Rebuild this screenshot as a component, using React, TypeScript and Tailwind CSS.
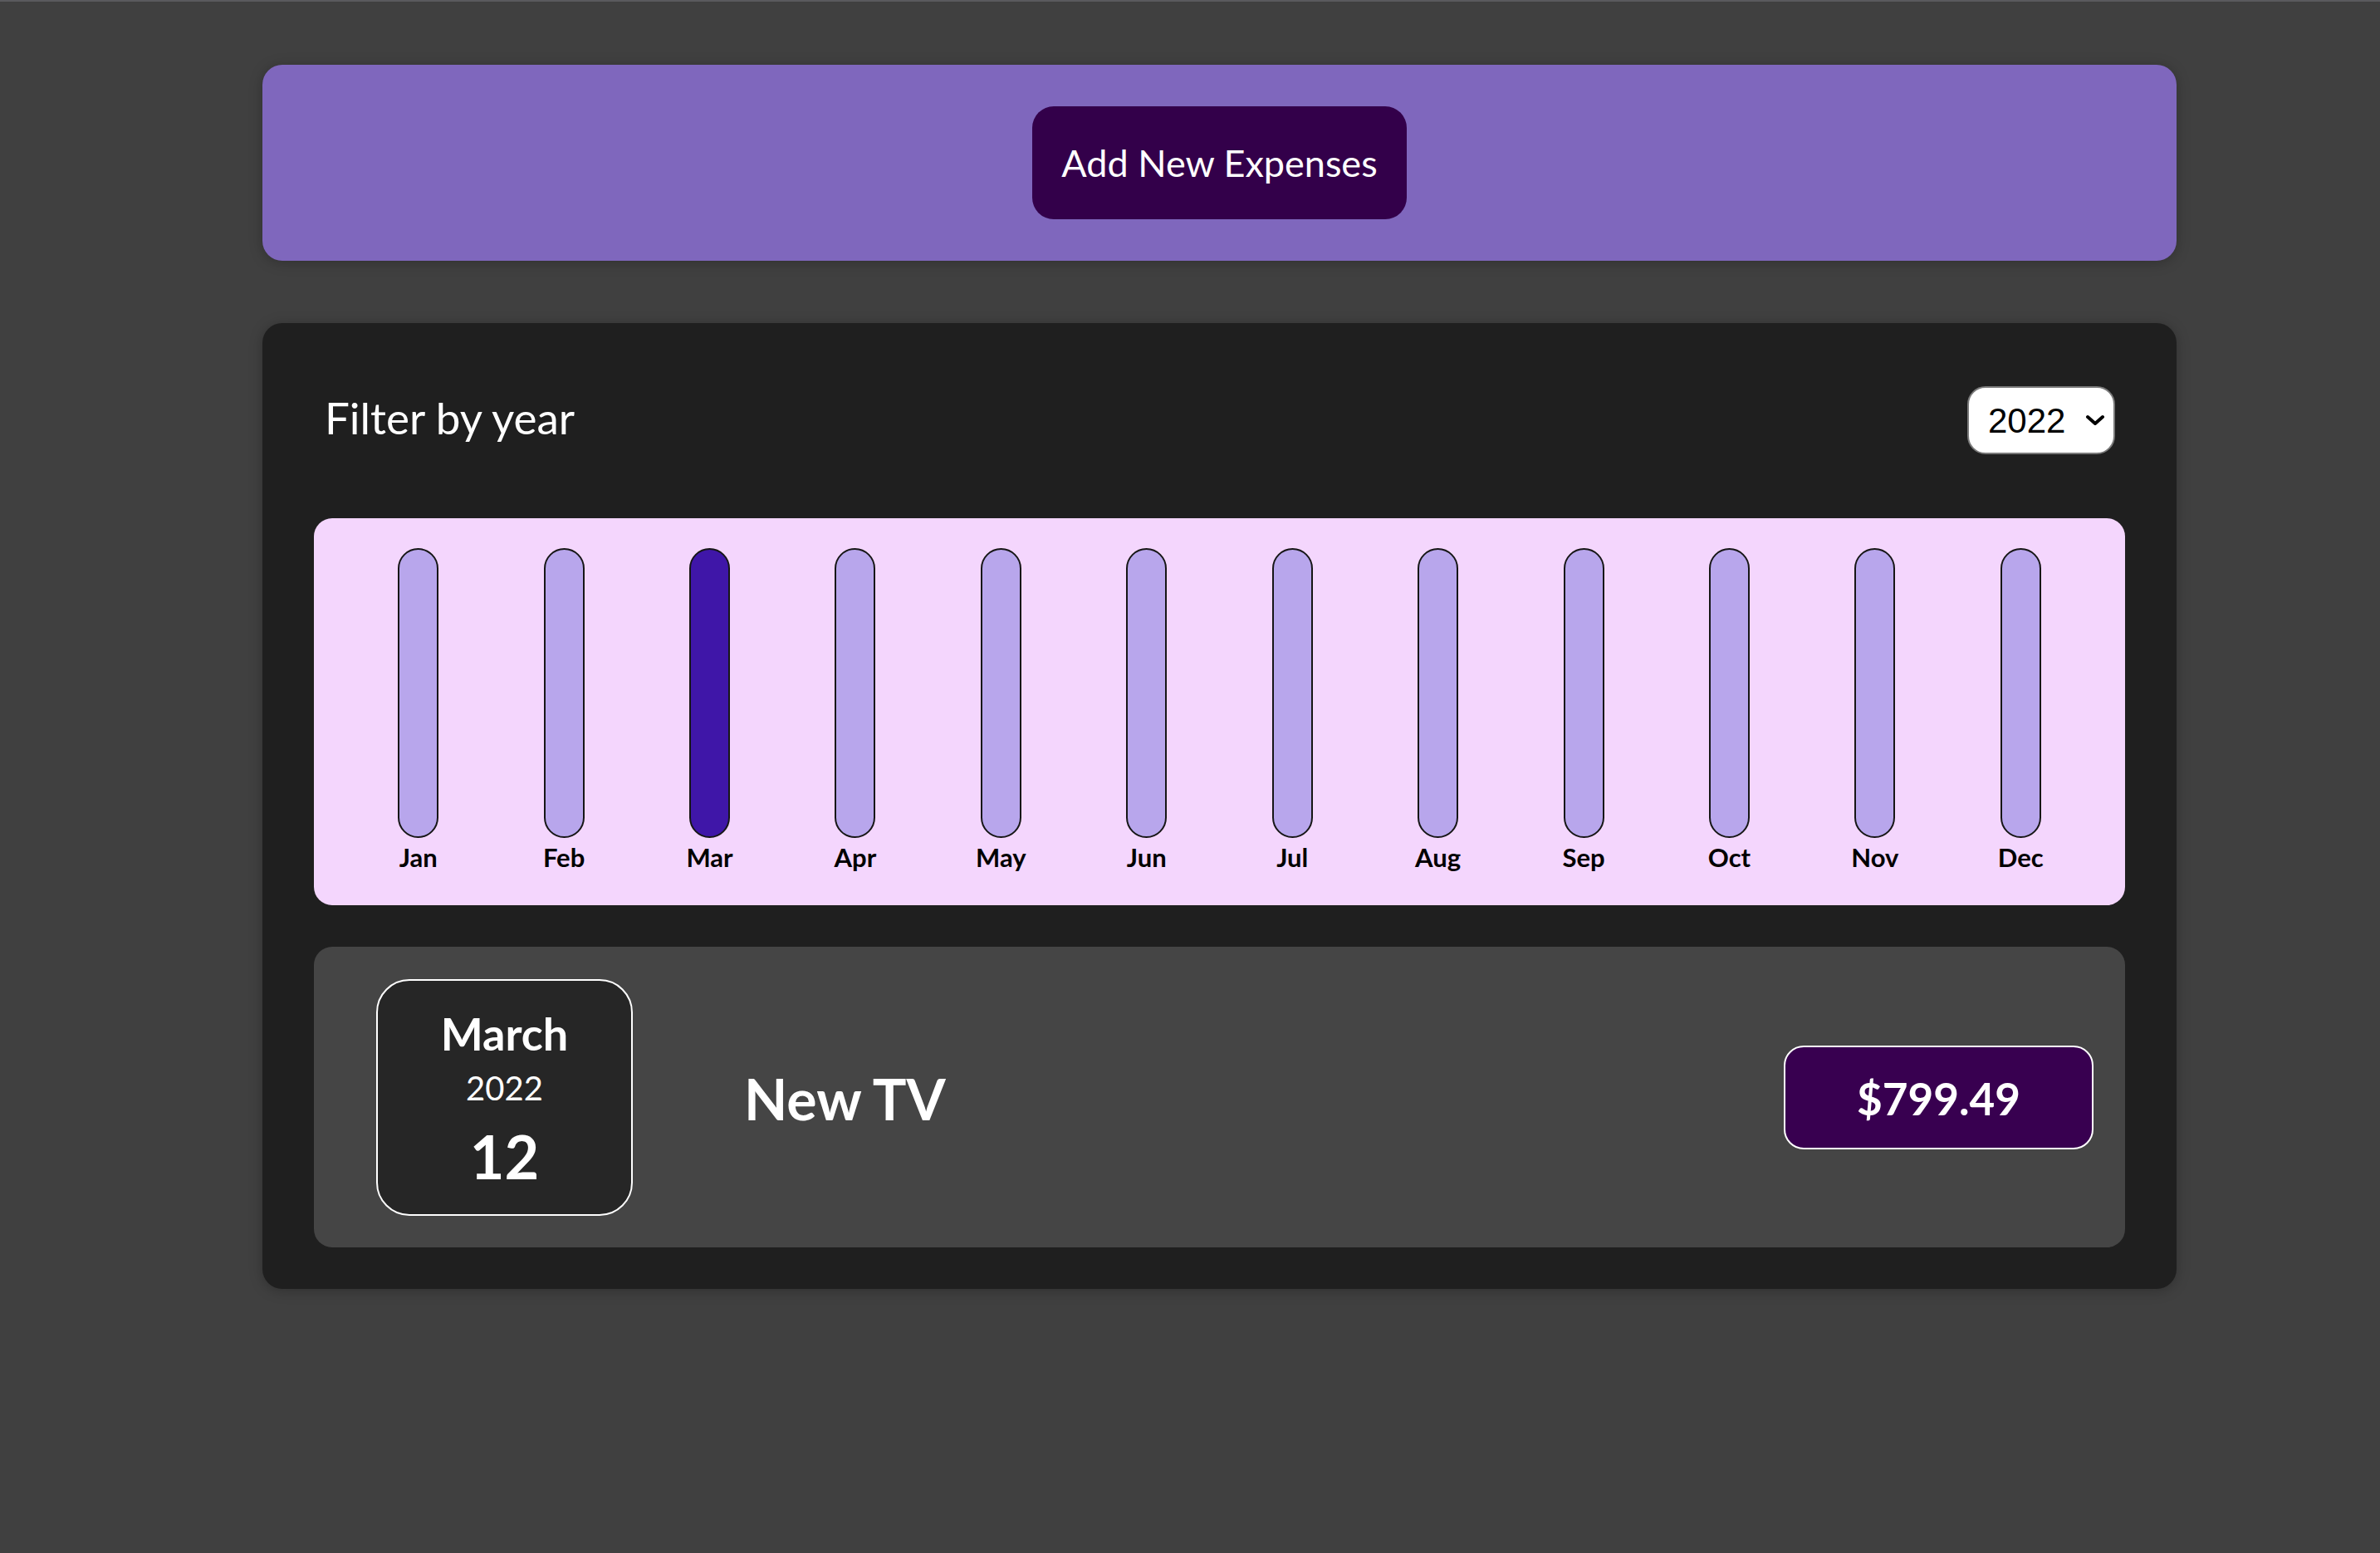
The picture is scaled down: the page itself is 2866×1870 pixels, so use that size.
import React, { useState } from 'react';

const months = ['Jan', 'Feb', 'Mar', 'Apr', 'May', 'Jun', 'Jul', 'Aug', 'Sep', 'Oct', 'Nov', 'Dec'];

const ChartBar: React.FC<{ label: string; active: boolean }> = ({ label, active }) => (
  <div className="flex flex-col items-center">
    <div
      className={
        active
          ? 'w-[49px] h-[349px] rounded-full border-2 border-[#161616] bg-[#3f16a8]'
          : 'w-[49px] h-[349px] rounded-full border-2 border-[#161616] bg-[#b8a6ec]'
      }
    />
    <div className="mt-[5px] text-[31px] leading-[36px] font-bold text-black">{label}</div>
  </div>
);

const App: React.FC = () => {
  const [year, setYear] = useState('2022');

  return (
    <div className="min-h-screen bg-[#404040] border-t-2 border-[#5a5a5e] pt-[76px] pb-10 font-['Lato','Noto_Sans',sans-serif]">
      {/* New expense bar */}
      <div className="ml-[316px] w-[2305px] h-[236px] rounded-[24px] bg-[#7f67bd] flex items-center justify-center shadow-[0_2px_16px_rgba(0,0,0,0.25)]">
        <button className="w-[451px] h-[136px] rounded-[26px] bg-[#33004a] text-white text-[45px] pt-[2px]">
          Add New Expenses
        </button>
      </div>

      {/* Expenses card */}
      <div className="mt-[75px] ml-[316px] w-[2305px] rounded-[24px] bg-[#1f1f1f] px-[62px] pt-[76px] pb-[50px] shadow-[0_2px_16px_rgba(0,0,0,0.25)]">
        <div className="flex h-[82px] items-center justify-between">
          <div className="pl-[13px] pb-[6px] text-white text-[53px] leading-[64px]">Filter by year</div>
          <div className="relative mr-[12px]">
            <select
              value={year}
              onChange={(e) => setYear(e.target.value)}
              className="appearance-none w-[178px] h-[82px] rounded-[22px] border-2 border-[#7a7a7a] bg-white pl-[23px] text-[42px] text-black font-['Liberation_Sans',Arial,sans-serif] outline-none"
            >
              <option value="2022">2022</option>
              <option value="2021">2021</option>
              <option value="2020">2020</option>
              <option value="2019">2019</option>
            </select>
            <svg
              className="pointer-events-none absolute right-[12px] top-[34px]"
              width="24"
              height="14"
              viewBox="0 0 24 14"
              fill="none"
              stroke="black"
              strokeWidth="4"
              strokeLinecap="round"
              strokeLinejoin="round"
            >
              <path d="M3 3 L12 11 L21 3" />
            </svg>
          </div>
        </div>

        {/* Chart */}
        <div className="mt-[77px] h-[466px] rounded-[22px] bg-[#f4d6fd] px-[38px] pt-[36px] grid grid-cols-12">
          {months.map((m) => (
            <ChartBar key={m} label={m} active={m === 'Mar'} />
          ))}
        </div>

        {/* Expense item */}
        <div className="mt-[50px] h-[362px] rounded-[22px] bg-[#454545] flex items-center pl-[75px] pr-[38px]">
          <div className="w-[309px] h-[285px] rounded-[40px] border-2 border-white bg-[#262626] flex flex-col items-center justify-center pt-[11px] text-white">
            <div className="text-[54px] font-bold leading-[72px]">March</div>
            <div className="text-[40px] leading-[58px]">2022</div>
            <div className="text-[72px] font-bold leading-[106px]">12</div>
          </div>
          <div className="ml-[134px] pt-[4px] text-white text-[68px] font-bold">New TV</div>
          <div className="ml-auto w-[373px] h-[125px] rounded-[24px] border-2 border-white bg-[#380050] flex items-center justify-center pt-[4px] text-white text-[53px] font-bold">
            $799.49
          </div>
        </div>
      </div>
    </div>
  );
};

export default App;
